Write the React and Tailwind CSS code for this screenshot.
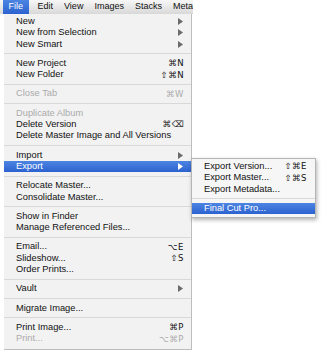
const mainItems = [
  { label: 'New', arrow: true },
  { label: 'New from Selection', arrow: true },
  { label: 'New Smart', arrow: true },
  { sep: true },
  { label: 'New Project', key: '⌘N' },
  { label: 'New Folder', key: '⇧⌘N' },
  { sep: true },
  { label: 'Close Tab', key: '⌘W', disabled: true },
  { sep: true },
  { label: 'Duplicate Album', disabled: true },
  { label: 'Delete Version', key: '⌘⌫' },
  { label: 'Delete Master Image and All Versions' },
  { sep: true },
  { label: 'Import', arrow: true },
  { label: 'Export', arrow: true, active: true },
  { sep: true },
  { label: 'Relocate Master...' },
  { label: 'Consolidate Master...' },
  { sep: true },
  { label: 'Show in Finder' },
  { label: 'Manage Referenced Files...' },
  { sep: true },
  { label: 'Email...', key: '⌥E' },
  { label: 'Slideshow...', key: '⇧S' },
  { label: 'Order Prints...' },
  { sep: true },
  { label: 'Vault', arrow: true },
  { sep: true },
  { label: 'Migrate Image...' },
  { sep: true },
  { label: 'Print Image...', key: '⌘P' },
  { label: 'Print...', key: '⌥⌘P', disabled: true },
];

const exportItems = [
  { label: 'Export Version...', key: '⇧⌘E' },
  { label: 'Export Master...', key: '⇧⌘S' },
  { label: 'Export Metadata...' },
  { sep: true },
  { label: 'Final Cut Pro...', active: true },
];

const titles = ['Edit', 'View', 'Images', 'Stacks', 'Metadata'];

const Arrow = ({ active }) => (
  <svg width="5" height="7" viewBox="0 0 5 7" className="mr-[1px]">
    <path d="M0 0 L5 3.5 L0 7 Z" fill={active ? '#ffffff' : '#6b6b6b'} />
  </svg>
);

const Separator = () => (
  <div className="h-2 flex items-center">
    <div className="h-px w-full bg-[#d9d9d9]" />
  </div>
);

const Row = ({ item, padLeft, padRight, children }) => {
  const color = item.active ? 'text-white' : item.disabled ? 'text-[#ababab]' : 'text-[#111]';
  return (
    <div
      className={`relative h-[11.3px] flex items-center justify-between ${padLeft} ${padRight} ${color} ${
        item.active ? 'bg-gradient-to-b from-[#4c85e2] to-[#2c62d0]' : ''
      }`}
    >
      <span className="leading-none whitespace-nowrap">{item.label}</span>
      {item.arrow && <Arrow active={item.active} />}
      {item.key && (
        <span className="leading-none whitespace-nowrap font-['DejaVu_Sans',sans-serif] text-[8.5px] tracking-[0.5px]">
          {item.key}
        </span>
      )}
      {children}
    </div>
  );
};

const ExportMenu = () => (
  <div className="absolute left-[100%] top-[-3px] w-[125px] bg-[#f6f6f6] border border-[#b5b5b5] shadow-[1px_2px_4px_rgba(0,0,0,0.3)] pt-[2px] pb-[3px]">
    {exportItems.map((item, i) =>
      item.sep ? (
        <Separator key={i} />
      ) : (
        <Row key={i} item={item} padLeft="pl-[12px]" padRight="pr-[8px]" />
      )
    )}
  </div>
);

export default function App() {
  return (
    <div className="w-[325px] h-[352px] bg-white overflow-hidden font-['Liberation_Sans',Arial,sans-serif] text-[9.3px]">
      {/* menu bar */}
      <div className="w-[193px] h-[14px] flex items-center overflow-hidden whitespace-nowrap bg-gradient-to-b from-[#f7f7f7] to-[#d8d8d8] text-[9px] text-[#111]">
        <div className="h-full ml-[3px] mr-[9px] px-[5.5px] flex items-center bg-gradient-to-b from-[#4c85e2] to-[#2c62d0] text-white">
          File
        </div>
        <div className="flex items-center gap-[11px]">
          {titles.map((t) => (
            <span key={t}>{t}</span>
          ))}
        </div>
      </div>

      {/* File menu */}
      <div className="ml-[4px] w-[188px] bg-[#f2f2f2] border-r border-b border-[#bdbdbd] pt-[2px] pb-[4px] relative">
        {mainItems.map((item, i) =>
          item.sep ? (
            <Separator key={i} />
          ) : (
            <Row key={i} item={item} padLeft="pl-[12px]" padRight="pr-[7px]">
              {item.active && <ExportMenu />}
            </Row>
          )
        )}
      </div>
    </div>
  );
}
